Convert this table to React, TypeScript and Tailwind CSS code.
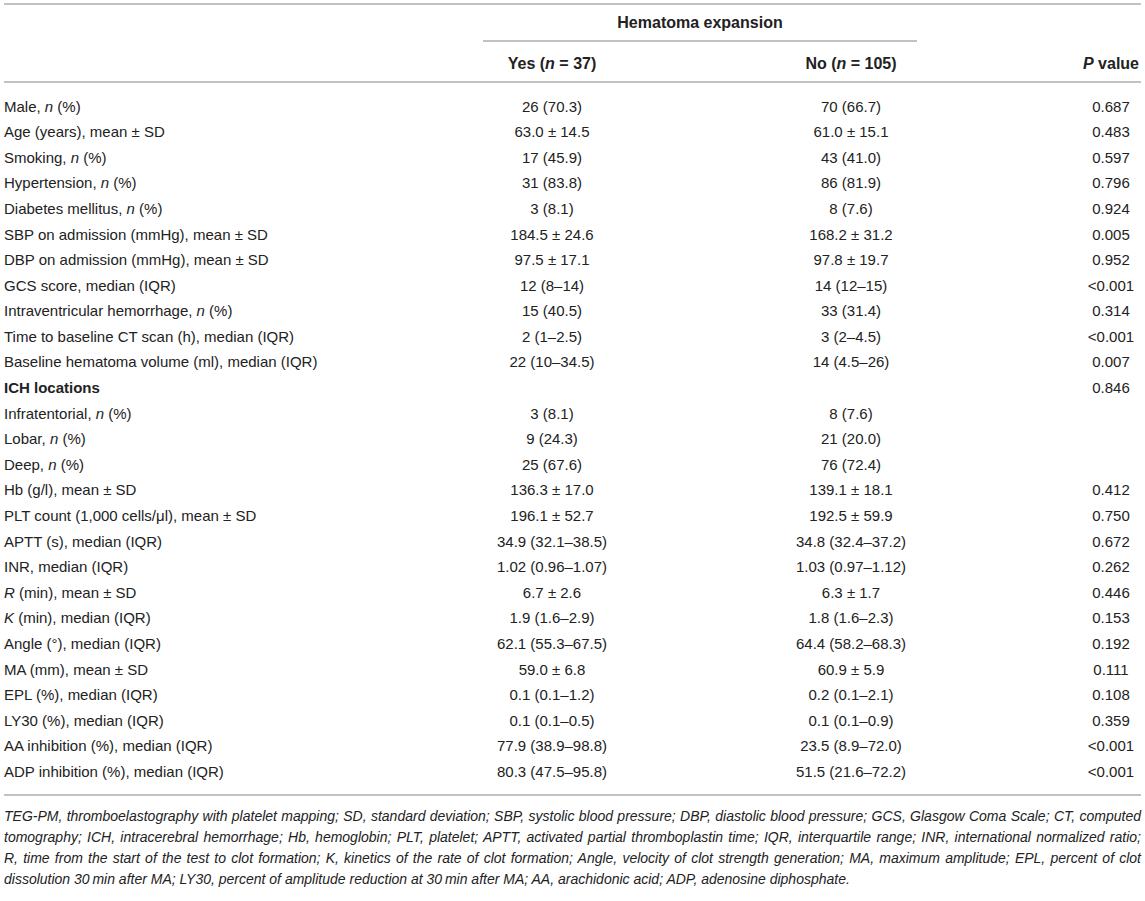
import React from "react";

type Row = {
  label: React.ReactNode;
  yes?: string;
  no?: string;
  p?: string;
  bold?: boolean;
};

const n = <i>n</i>;

const rows: Row[] = [
  { label: <>Male, {n} (%)</>, yes: "26 (70.3)", no: "70 (66.7)", p: "0.687" },
  { label: "Age (years), mean ± SD", yes: "63.0 ± 14.5", no: "61.0 ± 15.1", p: "0.483" },
  { label: <>Smoking, {n} (%)</>, yes: "17 (45.9)", no: "43 (41.0)", p: "0.597" },
  { label: <>Hypertension, {n} (%)</>, yes: "31 (83.8)", no: "86 (81.9)", p: "0.796" },
  { label: <>Diabetes mellitus, {n} (%)</>, yes: "3 (8.1)", no: "8 (7.6)", p: "0.924" },
  { label: "SBP on admission (mmHg), mean ± SD", yes: "184.5 ± 24.6", no: "168.2 ± 31.2", p: "0.005" },
  { label: "DBP on admission (mmHg), mean ± SD", yes: "97.5 ± 17.1", no: "97.8 ± 19.7", p: "0.952" },
  { label: "GCS score, median (IQR)", yes: "12 (8–14)", no: "14 (12–15)", p: "<0.001" },
  { label: <>Intraventricular hemorrhage, {n} (%)</>, yes: "15 (40.5)", no: "33 (31.4)", p: "0.314" },
  { label: "Time to baseline CT scan (h), median (IQR)", yes: "2 (1–2.5)", no: "3 (2–4.5)", p: "<0.001" },
  { label: "Baseline hematoma volume (ml), median (IQR)", yes: "22 (10–34.5)", no: "14 (4.5–26)", p: "0.007" },
  { label: "ICH locations", p: "0.846", bold: true },
  { label: <>Infratentorial, {n} (%)</>, yes: "3 (8.1)", no: "8 (7.6)" },
  { label: <>Lobar, {n} (%)</>, yes: "9 (24.3)", no: "21 (20.0)" },
  { label: <>Deep, {n} (%)</>, yes: "25 (67.6)", no: "76 (72.4)" },
  { label: "Hb (g/l), mean ± SD", yes: "136.3 ± 17.0", no: "139.1 ± 18.1", p: "0.412" },
  { label: "PLT count (1,000 cells/μl), mean ± SD", yes: "196.1 ± 52.7", no: "192.5 ± 59.9", p: "0.750" },
  { label: "APTT (s), median (IQR)", yes: "34.9 (32.1–38.5)", no: "34.8 (32.4–37.2)", p: "0.672" },
  { label: "INR, median (IQR)", yes: "1.02 (0.96–1.07)", no: "1.03 (0.97–1.12)", p: "0.262" },
  { label: <><i>R</i> (min), mean ± SD</>, yes: "6.7 ± 2.6", no: "6.3 ± 1.7", p: "0.446" },
  { label: <><i>K</i> (min), median (IQR)</>, yes: "1.9 (1.6–2.9)", no: "1.8 (1.6–2.3)", p: "0.153" },
  { label: "Angle (°), median (IQR)", yes: "62.1 (55.3–67.5)", no: "64.4 (58.2–68.3)", p: "0.192" },
  { label: "MA (mm), mean ± SD", yes: "59.0 ± 6.8", no: "60.9 ± 5.9", p: "0.111" },
  { label: "EPL (%), median (IQR)", yes: "0.1 (0.1–1.2)", no: "0.2 (0.1–2.1)", p: "0.108" },
  { label: "LY30 (%), median (IQR)", yes: "0.1 (0.1–0.5)", no: "0.1 (0.1–0.9)", p: "0.359" },
  { label: "AA inhibition (%), median (IQR)", yes: "77.9 (38.9–98.8)", no: "23.5 (8.9–72.0)", p: "<0.001" },
  { label: "ADP inhibition (%), median (IQR)", yes: "80.3 (47.5–95.8)", no: "51.5 (21.6–72.2)", p: "<0.001" },
];

const footnote = [
  "TEG-PM, thromboelastography with platelet mapping; SD, standard deviation; SBP, systolic blood pressure; DBP, diastolic blood pressure; GCS, Glasgow Coma Scale; CT, computed",
  "tomography; ICH, intracerebral hemorrhage; Hb, hemoglobin; PLT, platelet; APTT, activated partial thromboplastin time; IQR, interquartile range; INR, international normalized ratio;",
  "R, time from the start of the test to clot formation; K, kinetics of the rate of clot formation; Angle, velocity of clot strength generation; MA, maximum amplitude; EPL, percent of clot",
  "dissolution 30\u2009min after MA; LY30, percent of amplitude reduction at 30\u2009min after MA; AA, arachidonic acid; ADP, adenosine diphosphate.",
];

const cols = "grid grid-cols-[479px_138px_460px_60px]";

const Rule = () => <div className="h-[2px] bg-[#c2c2c2]" />;

export default function App() {
  return (
    <div className="w-[1145px] h-[901px] bg-white px-[4px] pt-[3px] text-[#222] text-[15px] font-['Liberation_Sans',Arial,sans-serif] overflow-hidden">
      <Rule />

      {/* Header */}
      <div className={cols}>
        <div />
        <div className="col-span-2 w-[434px]">
          <div className="h-[35px] flex items-center justify-center font-bold text-[16px]">Hematoma expansion</div>
          <div className="h-[2px] bg-[#c2c2c2]" />
        </div>
        <div />
      </div>
      <div className={`${cols} h-[39px] items-center pt-[4px] font-bold text-[16px]`}>
        <div />
        <div className="text-center">
          Yes (<i>n</i> = 37)
        </div>
        <div className="text-center">
          No (<i>n</i> = 105)
        </div>
        <div className="text-center whitespace-nowrap">
          <i>P</i> value
        </div>
      </div>
      <Rule />

      {/* Body */}
      <div className="pt-[11px] pb-[9px]">
        {rows.map((r, i) => (
          <div key={i} className={`${cols} h-[25.6px] items-center`}>
            <div className={r.bold ? "font-bold" : ""}>{r.label}</div>
            <div className="text-center">{r.yes}</div>
            <div className="text-center">{r.no}</div>
            <div className="text-center">{r.p}</div>
          </div>
        ))}
      </div>
      <Rule />

      {/* Footnote */}
      <div className="mt-[10px] italic text-[14px] leading-[21px]">
        {footnote.map((line, i) => (
          <div
            key={i}
            className={i < footnote.length - 1 ? "text-justify [text-align-last:justify]" : "text-left"}
          >
            {line}
          </div>
        ))}
      </div>
    </div>
  );
}
